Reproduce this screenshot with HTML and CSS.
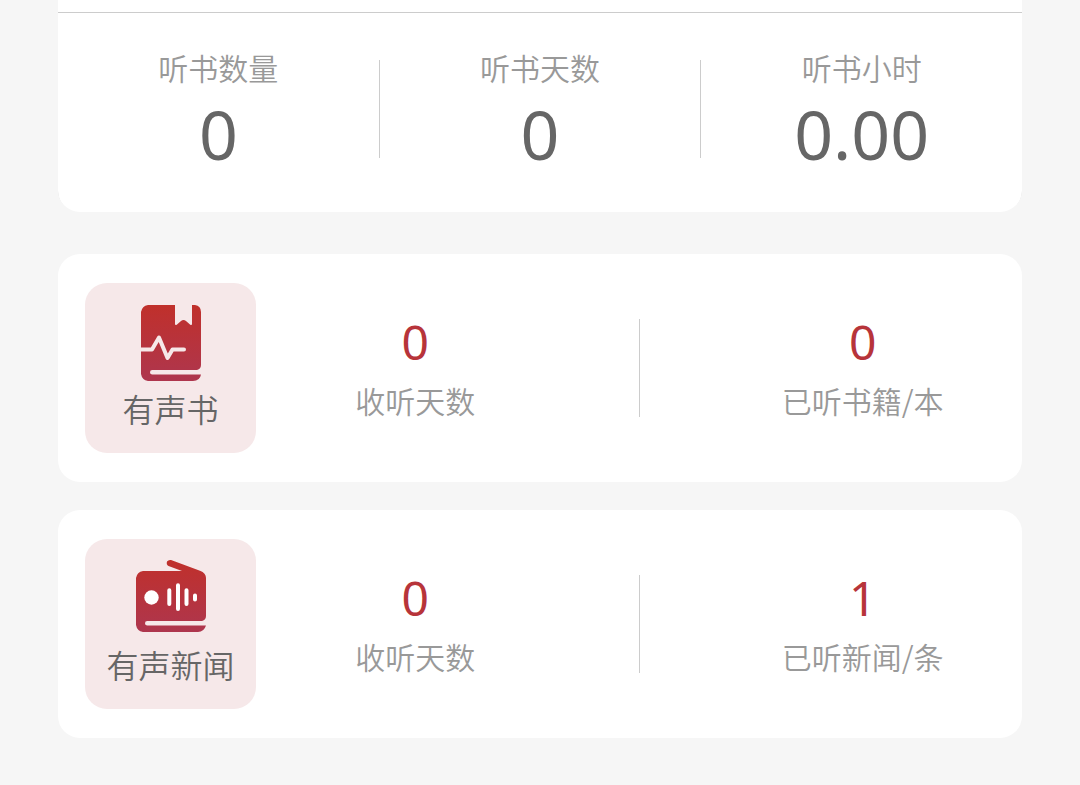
FILE: index.html
```
<!DOCTYPE html>
<html lang="zh-CN">
<head>
    <meta charset="UTF-8">
    <meta name="viewport" content="width=device-width, initial-scale=1.0">
    <title>听书统计</title>
    <link rel="stylesheet" href="styles.css">
</head>
<body>
    <main class="container">
        <section class="summary">
            <div class="summary-item">
                <div class="label">听书数量</div>
                <div class="total">0</div>
            </div>
            <div class="divider"></div>
            <div class="summary-item">
                <div class="label">听书天数</div>
                <div class="total">0</div>
            </div>
            <div class="divider"></div>
            <div class="summary-item">
                <div class="label">听书小时</div>
                <div class="total">0.00</div>
            </div>
        </section>

        <section class="card">
            <div class="tile">
                <svg class="icon" width="60" height="76" viewBox="0 0 60 76" aria-hidden="true">
                    <defs>
                        <linearGradient id="bookFill" x1="0" y1="0" x2="0" y2="1">
                            <stop offset="0" stop-color="#c0302b"/>
                            <stop offset="1" stop-color="#ae364e"/>
                        </linearGradient>
                    </defs>
                    <path fill="url(#bookFill)" d="M7 0H34V18.500Q34 21 36 19.500L40 16Q42.500 14 45 16L49 19.500Q51 21 51 18.500V0H54Q60 1 60 7V60Q60 64 56 65H11.300A2.300 2.300 0 0 0 11.300 69.600H60Q59 76 52 76H7Q1 75 0 69V7Q1 1 7 0Z"/>
                    <path class="pulse" d="M0 44.500H11L18 32.500L26.500 53L31.500 44.500H43"/>
                </svg>
                <div class="tile-name">有声书</div>
            </div>
            <div class="stats">
                <div class="stat">
                    <div class="count">0</div>
                    <div class="label">收听天数</div>
                </div>
                <div class="divider"></div>
                <div class="stat">
                    <div class="count">0</div>
                    <div class="label">已听书籍/本</div>
                </div>
            </div>
        </section>

        <section class="card">
            <div class="tile">
                <svg class="icon" width="70" height="76" viewBox="0 1 70 76" aria-hidden="true">
                    <defs>
                        <linearGradient id="radioFill" x1="0" y1="0" x2="0" y2="1">
                            <stop offset="0" stop-color="#c0302b"/>
                            <stop offset="1" stop-color="#ae364e"/>
                        </linearGradient>
                    </defs>
                    <path fill="url(#radioFill)" d="M7 11H46L32.500 6Q30 4.500 31 1.500Q32.500 -0.500 35 0L64 10.700Q70 13 70 18V56Q70 60 66 61H11.300A2.300 2.300 0 0 0 11.300 65.600H70Q68 72 62 72H7Q1 71 0 65V18Q1 12 7 11Z"/>
                    <circle class="dial" cx="15.500" cy="37.500" r="7.200"/>
                    <path class="wave" d="M33.300 30.200V44M42 25.200V49M50.500 30.200V44M59 35.500V39.500"/>
                </svg>
                <div class="tile-name">有声新闻</div>
            </div>
            <div class="stats">
                <div class="stat">
                    <div class="count">0</div>
                    <div class="label">收听天数</div>
                </div>
                <div class="divider"></div>
                <div class="stat">
                    <div class="count">1</div>
                    <div class="label">已听新闻/条</div>
                </div>
            </div>
        </section>
    </main>
</body>
</html>
```
FILE: styles.css
```
* { box-sizing: border-box; }
body { margin: 0; background: #f6f6f6; font-family: "Noto Sans CJK SC", sans-serif; font-weight: 350; }
.container { padding: 0 58px 47px; }
.label { font-size: 30px; line-height: 40px; color: #999; white-space: nowrap; }
.divider { flex: none; width: 1px; height: 98px; background: #ccc; }

/* totals */
.summary { display: flex; padding: 35px 0 38px; margin-bottom: 42px; background: #fff; border-top: 12px solid #fff; border-radius: 0 0 22px 22px; box-shadow: inset 0 1px 0 #ccc; }
.summary-item { flex: 1; text-align: center; }
.summary .divider { margin-top: 13px; }
.total { font-family: "Noto Sans", sans-serif; font-weight: 400; font-size: 68px; line-height: 80px; margin-top: 7px; color: #666; }

/* category cards */
.card { display: flex; align-items: center; padding: 29px 0 29px 27px; margin-bottom: 28px; background: #fff; border-radius: 22px; }
.card:last-child { margin-bottom: 0; }
.tile { flex: none; width: 171px; height: 170px; padding-top: 22px; background: #f6e8e9; border-radius: 22px; text-align: center; }
.icon { display: block; margin: 0 auto; overflow: visible; }
.tile-name { margin-top: 7px; font-size: 32px; line-height: 40px; color: #666; }
.stats { flex: 1; display: flex; align-items: center; gap: 64px; }
.stat { flex: 1; display: flex; flex-direction: column; align-items: center; padding-bottom: 4px; }
.count { font-family: "Noto Sans", sans-serif; font-weight: 400; font-size: 48px; line-height: 60px; margin-bottom: 8px; color: #b7343a; }
.pulse { fill: none; stroke: #f6e8e9; stroke-width: 4; stroke-linecap: round; stroke-linejoin: round; }
.dial { fill: #fff; }
.wave { fill: none; stroke: #fff; stroke-width: 4; stroke-linecap: round; }
```
